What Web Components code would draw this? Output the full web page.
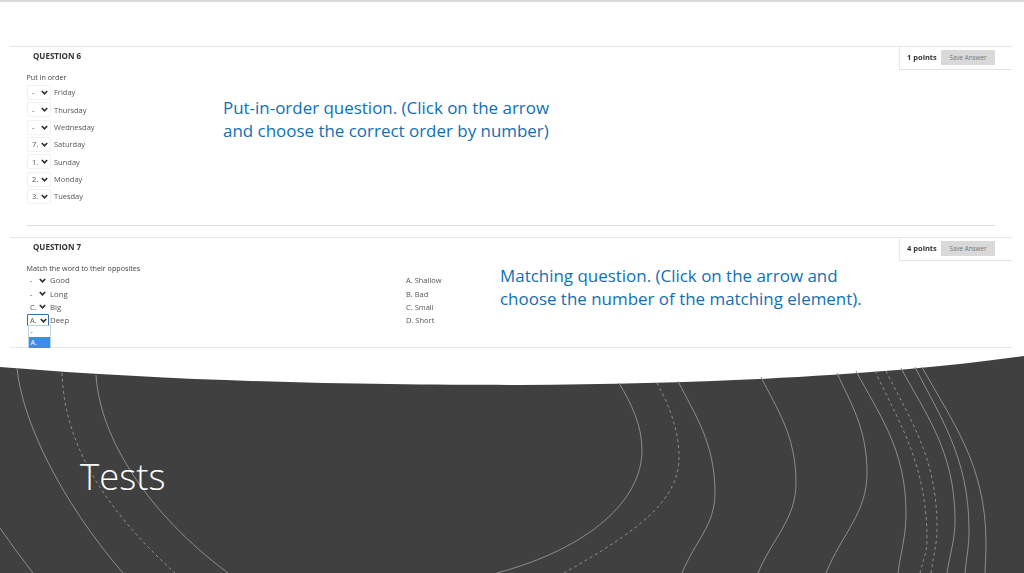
<!doctype html>
<html>
<head>
<meta charset="utf-8">
<title>Tests</title>
<style>
  html, body { margin: 0; height: 100%; overflow: hidden; background: #fff; }
  body { font-family: "Open Sans", "Liberation Sans", sans-serif; }
</style>
</head>
<body>
<slide-page>
  <quiz-question number="6" points="1" inset>
    <pick-list prompt="Put in order" style="width:196px">
      <pick-row label="Friday" value="-"></pick-row>
      <pick-row label="Thursday" value="-"></pick-row>
      <pick-row label="Wednesday" value="-"></pick-row>
      <pick-row label="Saturday" value="7."></pick-row>
      <pick-row label="Sunday" value="1."></pick-row>
      <pick-row label="Monday" value="2."></pick-row>
      <pick-row label="Tuesday" value="3."></pick-row>
    </pick-list>
    <note-text style="margin-top:26px">Put-in-order question. (Click on the arrow<br>and choose the correct order by number)</note-text>
  </quiz-question>
  <quiz-question number="7" points="4" style="margin-top:11px">
    <pick-list prompt="Match the word to their opposites" compact style="width:379px">
      <pick-row compact label="Good" value="-"></pick-row>
      <pick-row compact label="Long" value="-"></pick-row>
      <pick-row compact label="Big" value="C."></pick-row>
      <pick-row compact open label="Deep" value="A."></pick-row>
    </pick-list>
    <option-list style="width:94px">
      <span>A. Shallow</span>
      <span>B. Bad</span>
      <span>C. Small</span>
      <span>D. Short</span>
    </option-list>
    <note-text style="margin-top:3px">Matching question. (Click on the arrow and<br>choose the number of the matching element).</note-text>
  </quiz-question>
  <wave-footer>Tests</wave-footer>
</slide-page>

<script>
customElements.define('slide-page', class extends HTMLElement {
  constructor() {
    super()
    this.attachShadow({ mode: 'open' }).innerHTML = `
      <style>
        :host {
          display: flex;
          flex-direction: column;
          height: 573px;
          box-sizing: border-box;
          border-top: 2px solid #d9d9d9;
          padding-top: 44px;
          background: #fff;
        }
      </style>
      <slot></slot>`
  }
})

customElements.define('quiz-question', class extends HTMLElement {
  constructor() {
    super()
    const n = this.getAttribute('number')
    const p = this.getAttribute('points')
    this.attachShadow({ mode: 'open' }).innerHTML = `
      <style>
        :host {
          display: block;
          flex: none;
          margin: 0 12px 0 10px;
          border-top: 1px solid #e6e6e6;
          color: #444;
        }
        header {
          display: flex;
          justify-content: space-between;
          height: 23px;
        }
        h2 {
          margin: 3px 0 0 23px;
          font-size: 8px;
          line-height: 12px;
          font-weight: 700;
          color: #333;
          filter: blur(0.3px);
        }
        .score {
          display: flex;
          align-items: flex-start;
          gap: 5px;
          box-sizing: border-box;
          width: 113px;
          padding: 3px 0 0 7px;
          border-left: 1px solid #e8e8e8;
          border-bottom: 1px solid #e2e2e2;
          font-size: 7.5px;
          line-height: 15px;
          font-weight: 700;
          color: #333;
        }
        .score span { flex: none; width: 29px; white-space: nowrap; filter: blur(0.3px); }
        .score button {
          width: 54px;
          height: 15px;
          padding: 0;
          border: 0;
          background: #d9d9d9;
          color: #777;
          font: 400 6.3px/15px "Open Sans", sans-serif;
        }
        main {
          display: flex;
          align-items: flex-start;
          padding-left: 17px;
        }
        .rule { height: 1px; background: #e8e8e8; margin-top: 20px; }
        :host([inset]) .rule { margin: 20px 17px 0; background: #dcdcdc; }
      </style>
      <header>
        <h2>QUESTION ${n}</h2>
        <div class="score"><span>${p} points</span><button>Save Answer</button></div>
      </header>
      <main><slot></slot></main>
      <div class="rule"></div>`
  }
})

customElements.define('pick-list', class extends HTMLElement {
  constructor() {
    super()
    this.attachShadow({ mode: 'open' }).innerHTML = `
      <style>
        :host { display: block; flex: none; }
        p {
          margin: 0 0 0 -0.5px;
          height: 13.8px;
          font-size: 7.2px;
          line-height: 14px;
          color: #444;
          white-space: nowrap;
          filter: blur(0.25px);
        }
        div { display: grid; grid-auto-rows: 17.33px; }
        :host([compact]) div { grid-auto-rows: 13.3px; }
        :host([compact]) p { height: 12.5px; line-height: 15px; }
      </style>
      <p>${this.getAttribute('prompt')}</p>
      <div><slot></slot></div>`
  }
})

customElements.define('pick-row', class extends HTMLElement {
  constructor() {
    super()
    this.attachShadow({ mode: 'open' }).innerHTML = `
      <style>
        :host {
          display: flex;
          align-items: center;
          gap: 3px;
          position: relative;
          font-size: 7.5px;
          color: #555;
        }
        .box {
          display: flex;
          align-items: center;
          justify-content: space-between;
          box-sizing: border-box;
          width: 24px;
          height: 15px;
          padding: 0 2px 0 4px;
          border: 1px solid #f1f1f1;
          border-radius: 2px;
          background: #fff;
        }
        .text { filter: blur(0.25px); }
        svg { width: 7px; height: 5px; flex: none; }
        :host([compact]) { gap: 2px; font-size: 7.8px; }
        :host([compact]) .box { width: 21px; height: 12px; padding: 0 1px 0 2px; border-color: #fff; font-size: 7.5px; }
        :host([open]) .box { width: 22px; border: 1px solid #3d6f9e; border-radius: 1px; }
        :host([open]) { gap: 1px; }
        .menu {
          position: absolute;
          left: 0.5px;
          top: 12px;
          width: 21px;
          border: 1px solid #bcd0e4;
          border-bottom: 0;
          background: #fff;
          font-size: 7px;
          line-height: 11px;
        }
        .menu div { height: 11px; padding-left: 2px; }
        .menu .on { background: #3b8ee6; color: #fff; }
      </style>
      <span class="box">
        <span class="text">${this.getAttribute('value')}</span>
        <svg viewBox="0 0 7 5"><polyline points="0.8,1 3.5,3.8 6.2,1" fill="none" stroke="#2b2b2b" stroke-width="1.6"/></svg>
      </span>
      <span class="text">${this.getAttribute('label')}</span>
      ${this.hasAttribute('open') ? '<div class="menu"><div>-</div><div class="on">A.</div></div>' : ''}`
  }
})

customElements.define('option-list', class extends HTMLElement {
  constructor() {
    super()
    this.attachShadow({ mode: 'open' }).innerHTML = `
      <style>
        :host {
          display: grid;
          flex: none;
          grid-auto-rows: 13.3px;
          align-items: center;
          margin-top: 12.5px;
          font-size: 7.5px;
          color: #555;
          filter: blur(0.25px);
        }
      </style>
      <slot></slot>`
  }
})

customElements.define('note-text', class extends HTMLElement {
  constructor() {
    super()
    this.attachShadow({ mode: 'open' }).innerHTML = `
      <style>
        :host {
          display: block;
          font-size: 16.95px;
          line-height: 23px;
          color: #0f6fb5;
          white-space: nowrap;
        }
      </style>
      <slot></slot>`
  }
})

// arcs on the right: top point, widest point, bottom point (page coordinates)
const arcs = [
  { t: [678,381], w: [715,493], b: [682,573] },
  { t: [761,377], w: [796,483], b: [758,573] },
  { t: [837,373], w: [867,473], b: [826,573] },
  { t: [856,371], w: [906,513], b: [898,573] },
  { t: [875,371], w: [927,540], b: [920,573], dash: true },
  { t: [886,371], w: [937,527], b: [931,573], dash: true },
  { t: [901,368], w: [955,520], b: [947,573] },
  { t: [915,367], w: [969,530], b: [965,573] },
  { t: [922,367], w: [986,543], b: [985,573] },
]

function arcPath({ t, w, b }) {
  const c1 = [t[0] + (w[0] - t[0]) * 0.45, t[1] + (w[1] - t[1]) * 0.3]
  const c2 = [w[0], w[1] - (w[1] - t[1]) * 0.45]
  const c3 = [w[0], w[1] + (b[1] - w[1]) * 0.4]
  const c4 = [b[0] + (w[0] - b[0]) * 0.4, b[1] - (b[1] - w[1]) * 0.4]
  return `M${t} C${c1} ${c2} ${w} C${c3} ${c4} ${b}`
}

// the rest don't fit that shape, written by hand
const solidPaths = [
  'M17 368 C22 420 60 500 123 573',
  'M96 375 C100 440 150 515 228 573',
  'M0 528 Q15 550 33 573',
  'M619 383 C631 403 642 425 642 450 C642 500 590 548 497 573',
]
const dashedPaths = [
  'M62 373 C64 440 100 505 175 573',
  'M657 383 C669 405 679 430 679 457 C679 500 640 530 564 573',
]

customElements.define('wave-footer', class extends HTMLElement {
  constructor() {
    super()
    const path = (d, dash) => `<path d="${d}" ${dash ? 'stroke-dasharray="3 3"' : ''}/>`
    const lines = [
      ...solidPaths.map(d => path(d)),
      ...dashedPaths.map(d => path(d, true)),
      ...arcs.map(a => path(arcPath(a), a.dash)),
    ].join('')
    this.attachShadow({ mode: 'open' }).innerHTML = `
      <style>
        :host {
          display: block;
          position: relative;
          flex: none;
          height: 217px;
          margin-top: auto;
          color: #fff;
        }
        svg { position: absolute; inset: 0; width: 100%; height: 100%; }
        h1 {
          position: relative;
          margin: 0;
          padding: 94px 0 0 80px;
          font-size: 36.5px;
          line-height: 52px;
          font-weight: 300;
        }
      </style>
      <svg viewBox="0 356 1024 217" preserveAspectRatio="none">
        <path d="M0 367 C200 383 380 385 520 385 C720 384 900 374 1024 356 V573 H0 Z" fill="#404040"/>
        <g fill="none" stroke="#8d8d8d" stroke-width="1">${lines}</g>
      </svg>
      <h1><slot></slot></h1>`
  }
})
</script>
</body>
</html>
